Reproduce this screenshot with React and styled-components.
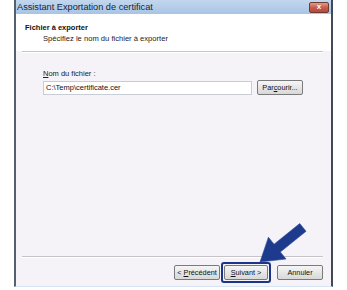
import React from "react";
import styled, { createGlobalStyle } from "styled-components";

const Global = createGlobalStyle`
  html, body { margin: 0; padding: 0; background: #ffffff; }
  body { font-family: "Liberation Sans", Tahoma, sans-serif; font-size: 8px; color: #1a1a1a; }
`;

const Page = styled.div`
  width: 347px;
  height: 290px;
  padding-left: 14px;
  box-sizing: border-box;
  display: flex;
  align-items: flex-start;
`;

const Window = styled.div`
  position: relative;
  width: 319px;
  height: 287px;
  box-sizing: border-box;
  border-left: 2px solid #56606e;
  border-right: 2px solid #3e4a5c;
  border-bottom: 1px solid #d6e2f2;
  background: #f5f3f7;
  display: flex;
  flex-direction: column;
`;

const TitleBar = styled.div`
  height: 14px;
  flex: none;
  background: linear-gradient(#c2d7ee, #a8c4e4);
  display: flex;
  align-items: center;
  justify-content: space-between;
  padding: 0 2px 0 1px;
`;

const Title = styled.span`
  font-size: 9.2px;
  color: #16243a;
  white-space: nowrap;
`;

const CloseButton = styled.div`
  width: 18px;
  height: 9px;
  border: 1px solid #6e3b34;
  border-radius: 2px;
  background: linear-gradient(#e09a88, #c4594a 55%, #b8493c);
  display: flex;
  align-items: center;
  justify-content: center;
  color: #ffffff;
  font-size: 8px;
  font-weight: bold;
  line-height: 1;
`;

const Header = styled.div`
  height: 37px;
  flex: none;
  background: #ffffff;
  padding: 9px 0 0 9px;
  box-sizing: border-box;
  display: flex;
  flex-direction: column;
  gap: 2px;
`;

const HeaderTitle = styled.div`
  font-weight: bold;
  font-size: 7.5px;
  color: #111;
`;

const HeaderSub = styled.div`
  padding-left: 18px;
  font-size: 7.6px;
  color: #222;
`;

const Separator = styled.div`
  flex: none;
  height: 1px;
  margin: 0 8px 0 6px;
  background: #c6c4c9;
  border-bottom: 1px solid #ffffff;
`;

const Body = styled.div`
  flex: 1;
  background: #f5f3f7;
  padding: 16px 0 0 27px;
  display: flex;
  flex-direction: column;
  gap: 2px;
`;

const Label = styled.div`
  font-size: 7.5px;
  color: #222;
  u { text-decoration: underline; }
`;

const FieldRow = styled.div`
  display: flex;
  align-items: center;
  gap: 5px;
`;

const Input = styled.div`
  width: 209px;
  height: 14px;
  box-sizing: border-box;
  border: 1px solid #c8ccd4;
  background: #ffffff;
  padding-left: 2px;
  display: flex;
  align-items: center;
  font-size: 7.5px;
  color: #111;
`;

const Button = styled.div`
  width: ${(p) => p.$w || 46}px;
  height: 15px;
  box-sizing: border-box;
  border: 1px solid #7a7a7a;
  border-radius: 2px;
  background: linear-gradient(#f6f6f6, #e6e6e6 50%, #d8d8d8);
  display: flex;
  align-items: center;
  justify-content: center;
  font-size: 7.3px;
  color: #111;
  white-space: nowrap;
  u { text-decoration: underline; }
`;

const Footer = styled.div`
  flex: none;
  height: 28px;
  display: flex;
  align-items: center;
  justify-content: flex-end;
  padding-right: 8px;
  gap: 6px;
`;

const FocusRing = styled.div`
  padding: 1px;
  border: 2px solid #1c3586;
  border-radius: 3px;
  display: flex;
`;

const Group = styled.div`
  display: flex;
  align-items: center;
  gap: 1px;
`;

const Arrow = styled.svg`
  position: absolute;
  left: 236px;
  top: 218px;
  width: 60px;
  height: 50px;
`;

export default function App() {
  return (
    <>
      <Global />
      <Page>
        <Window>
          <TitleBar>
            <Title>Assistant Exportation de certificat</Title>
            <CloseButton>x</CloseButton>
          </TitleBar>
          <Header>
            <HeaderTitle>Fichier à exporter</HeaderTitle>
            <HeaderSub>Spécifiez le nom du fichier à exporter</HeaderSub>
          </Header>
          <Separator />
          <Body>
            <Label>
              <u>N</u>om du fichier :
            </Label>
            <FieldRow>
              <Input>C:\Temp\certificate.cer</Input>
              <Button $w={46}>
                Par<u>c</u>ourir...
              </Button>
            </FieldRow>
          </Body>
          <Separator />
          <Footer>
            <Group>
              <Button $w={46}>
                &lt;&nbsp;<u>P</u>récédent
              </Button>
              <FocusRing>
                <Button $w={44}>
                  <u>S</u>uivant &gt;
                </Button>
              </FocusRing>
            </Group>
            <Button $w={46}>Annuler</Button>
          </Footer>
          <Arrow viewBox="250 218 60 50">
            <polygon
              points="258,262 266.4,237.2 272.05,244.2 297.75,223.5 304.05,231.3 278.35,252 284,259"
              fill="#1e3a8c"
              stroke="#2a4aa0"
              strokeWidth="0.6"
              strokeLinejoin="round"
            />
          </Arrow>
        </Window>
      </Page>
    </>
  );
}
